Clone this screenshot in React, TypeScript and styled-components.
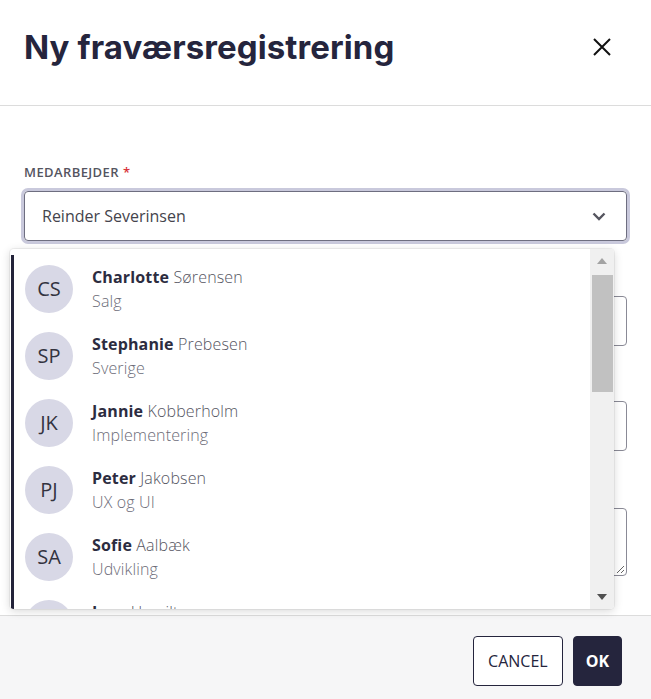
import React from 'react'
import styled, { createGlobalStyle } from 'styled-components'

const GlobalStyle = createGlobalStyle`
  html, body {
    margin: 0;
    padding: 0;
    height: 100%;
    background: #fff;
  }
  #root {
    min-height: 100vh;
  }
  * {
    box-sizing: border-box;
  }
`

const Page = styled.div`
  min-height: 100vh;
  display: flex;
  flex-direction: column;
  font-family: "Open Sans", "Liberation Sans", sans-serif;
  color: #25253d;
`

const Header = styled.header`
  height: 106px;
  display: flex;
  align-items: center;
  justify-content: space-between;
  padding: 0 37px 12px 24px;
  border-bottom: 1px solid #dcdcdc;
`

const Title = styled.h1`
  margin: 0;
  font-family: Inter, "Liberation Sans", sans-serif;
  font-size: 33px;
  font-weight: 700;
  letter-spacing: 0.1px;
  color: #25253d;
`

const CloseButton = styled.button`
  border: none;
  background: none;
  padding: 0;
  width: 24px;
  height: 24px;
  display: flex;
  align-items: center;
  justify-content: center;
  cursor: pointer;
`

const Body = styled.main`
  flex: 1;
  position: relative;
  padding: 57px 24px 0 24px;
  display: flex;
  flex-direction: column;
  gap: 27px;
`

const Field = styled.div<{ $gapTop?: number }>`
  display: flex;
  flex-direction: column;
  margin-top: ${p => p.$gapTop ?? 0}px;
`

const Label = styled.label`
  height: 18px;
  margin-bottom: 10px;
  font-size: 13px;
  font-weight: 600;
  letter-spacing: 0.4px;
  line-height: 18px;
  color: #55555f;
  text-transform: uppercase;

  > span {
    color: #d9333a;
    margin-left: 4px;
  }
`

const SelectBox = styled.div<{ $focused?: boolean }>`
  height: 50px;
  border: 1px solid ${p => (p.$focused ? '#6e6e80' : '#8a8a96')};
  border-radius: 4px;
  box-shadow: ${p => (p.$focused ? '0 0 0 3px #c9c9dc' : 'none')};
  display: flex;
  align-items: center;
  justify-content: space-between;
  padding: 0 20px 0 17px;
  font-size: 16px;
  color: #44444c;
`

const TextArea = styled.div`
  position: relative;
  height: 68px;
  border: 1px solid #8a8a96;
  border-radius: 4px;
`

const ResizeHandle = styled.svg`
  position: absolute;
  right: 1px;
  bottom: 1px;
`

const Dropdown = styled.div`
  position: absolute;
  top: 143px;
  left: 10px;
  width: 604px;
  height: 360px;
  display: flex;
  background: #fff;
  border-radius: 4px;
  overflow: hidden;
  box-shadow: 0 2px 10px rgba(0, 0, 0, 0.16), 0 0 0 1px rgba(0, 0, 0, 0.05);
`

const ListArea = styled.div`
  flex: 1;
  padding-top: 6px;
  padding-left: 1px;
  display: flex;
  flex-direction: column;
`

const List = styled.ul`
  flex: 1;
  margin: 0;
  padding: 0 0 0 11px;
  list-style: none;
  border-left: 3px solid #23233a;
  overflow: hidden;
`

const Item = styled.li`
  height: 67px;
  flex-shrink: 0;
  display: flex;
  align-items: center;
  gap: 19px;
`

const Avatar = styled.div`
  width: 48px;
  height: 48px;
  border-radius: 50%;
  background: #d8d8e6;
  display: flex;
  align-items: center;
  justify-content: center;
  font-size: 20px;
  color: #33333f;
  flex-shrink: 0;
`

const Person = styled.div`
  display: flex;
  flex-direction: column;
  font-size: 16px;
  line-height: 24px;
`

const Name = styled.div`
  color: #55555f;
  font-weight: 300;
  letter-spacing: 0.15px;

  > b {
    font-weight: 700;
    color: #2c2c40;
  }
`

const Department = styled.div`
  color: #6c6c78;
  font-weight: 300;
  letter-spacing: 0.15px;
`

const ScrollTrack = styled.div`
  width: 24px;
  background: #f0f0f0;
  display: flex;
  flex-direction: column;
  align-items: center;
`

const ScrollArrow = styled.div`
  height: 24px;
  width: 100%;
  display: flex;
  align-items: center;
  justify-content: center;
`

const ScrollThumb = styled.div`
  margin-top: 2px;
  width: 21px;
  height: 117px;
  background: #c1c1c1;
`

const Spacer = styled.div`
  flex: 1;
`

const Footer = styled.footer`
  height: 84px;
  border-top: 1px solid #dcdcdc;
  background: #f6f6f7;
  display: flex;
  justify-content: flex-end;
  align-items: flex-start;
  gap: 10px;
  padding: 20px 29px 0 0;
`

const Button = styled.button<{ $primary?: boolean }>`
  height: 50px;
  padding: 0 ${p => (p.$primary ? '12px' : '14px')};
  border-radius: 4px;
  border: 1px solid #25253d;
  background: ${p => (p.$primary ? '#25253d' : '#fff')};
  color: ${p => (p.$primary ? '#fff' : '#25253d')};
  font-family: "Open Sans", "Liberation Sans", sans-serif;
  font-size: 16px;
  font-weight: ${p => (p.$primary ? 700 : 500)};
  text-transform: uppercase;
  cursor: pointer;
`

const people = [
  { first: 'Charlotte', last: 'Sørensen', dept: 'Salg' },
  { first: 'Stephanie', last: 'Prebesen', dept: 'Sverige' },
  { first: 'Jannie', last: 'Kobberholm', dept: 'Implementering' },
  { first: 'Peter', last: 'Jakobsen', dept: 'UX og UI' },
  { first: 'Sofie', last: 'Aalbæk', dept: 'Udvikling' },
  { first: 'Lars', last: 'Hamilton', dept: 'Support' },
]

function Chevron() {
  return (
    <svg width="14" height="9" viewBox="0 0 14 9">
      <path d="M1.5 1.5 L7 7 L12.5 1.5" fill="none" stroke="#55555f" strokeWidth="2.4" />
    </svg>
  )
}

export default function App() {
  return (
    <Page>
      <GlobalStyle />
      <Header>
        <Title>Ny fraværsregistrering</Title>
        <CloseButton aria-label="Luk">
          <svg width="18" height="18" viewBox="0 0 18 18">
            <path d="M1 1 L17 17 M17 1 L1 17" stroke="#111" strokeWidth="2" />
          </svg>
        </CloseButton>
      </Header>

      <Body>
        <Field>
          <Label>Medarbejder<span>*</span></Label>
          <SelectBox $focused>
            Reinder Severinsen
            <Chevron />
          </SelectBox>
        </Field>
        <Field>
          <Label>Fraværstype</Label>
          <SelectBox />
        </Field>
        <Field>
          <Label>Periode</Label>
          <SelectBox />
        </Field>
        <Field $gapTop={2}>
          <Label>Note</Label>
          <TextArea>
            <ResizeHandle width="10" height="10" viewBox="0 0 10 10">
              <path d="M9 2 L2 9 M9 6 L6 9" stroke="#666" strokeWidth="1" />
            </ResizeHandle>
          </TextArea>
        </Field>

        <Dropdown>
          <ListArea>
            <List>
              {people.map(p => (
                <Item key={p.first}>
                  <Avatar>{p.first[0] + p.last[0]}</Avatar>
                  <Person>
                    <Name><b>{p.first}</b> {p.last}</Name>
                    <Department>{p.dept}</Department>
                  </Person>
                </Item>
              ))}
            </List>
          </ListArea>
          <ScrollTrack>
            <ScrollArrow>
              <svg width="10" height="6" viewBox="0 0 10 6">
                <path d="M0 6 L5 0 L10 6 Z" fill="#a3a3a3" />
              </svg>
            </ScrollArrow>
            <ScrollThumb />
            <Spacer />
            <ScrollArrow>
              <svg width="10" height="6" viewBox="0 0 10 6">
                <path d="M0 0 L10 0 L5 6 Z" fill="#505050" />
              </svg>
            </ScrollArrow>
          </ScrollTrack>
        </Dropdown>
      </Body>

      <Footer>
        <Button>Cancel</Button>
        <Button $primary>OK</Button>
      </Footer>
    </Page>
  )
}
